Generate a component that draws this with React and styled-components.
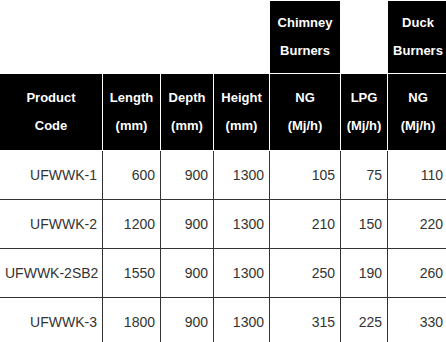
import React from 'react';
import styled, { createGlobalStyle } from 'styled-components';

const GlobalStyle = createGlobalStyle`
  html, body {
    margin: 0;
    padding: 0;
    background: #fff;
    overflow: hidden;
  }
  body {
    font-family: "Liberation Sans", Arial, Helvetica, sans-serif;
  }
`;

const Wrap = styled.div`
  width: 446px;
  height: 342px;
  overflow: hidden;
`;

const Table = styled.table`
  border-collapse: collapse;
  table-layout: fixed;
  width: 449px;
  margin-left: -1px;
  font-family: "Liberation Sans", Arial, Helvetica, sans-serif;
`;

const HeadCell = styled.th`
  background: ${p => (p.$blank ? '#fff' : '#000')};
  color: #fff;
  font-weight: bold;
  font-size: 13px;
  line-height: 28px;
  text-align: center;
  padding: ${p => (p.$top ? '8px 2px' : '10px 2px')};
  border: 1px solid ${p => (p.$blank ? 'transparent' : '#fff')};
  border-bottom: 1px solid #fff;
  white-space: nowrap;
`;

const Cell = styled.td`
  color: #333;
  font-size: 14px;
  line-height: 28px;
  text-align: right;
  padding: 10px 5px;
  border: 1px solid #333;
  white-space: nowrap;
`;

const widths = [103, 58, 53, 56, 71, 47, 61];

const rows = [
  ['UFWWK-1', 600, 900, 1300, 105, 75, 110],
  ['UFWWK-2', 1200, 900, 1300, 210, 150, 220],
  ['UFWWK-2SB2', 1550, 900, 1300, 250, 190, 260],
  ['UFWWK-3', 1800, 900, 1300, 315, 225, 330],
];

const heads = [
  ['Product', 'Code'],
  ['Length', '(mm)'],
  ['Depth', '(mm)'],
  ['Height', '(mm)'],
  ['NG', '(Mj/h)'],
  ['LPG', '(Mj/h)'],
  ['NG', '(Mj/h)'],
];

export default function App() {
  return (
    <Wrap>
      <GlobalStyle />
      <Table>
        <colgroup>
          {widths.map((w, i) => (
            <col key={i} style={{ width: w }} />
          ))}
        </colgroup>
        <thead>
          <tr>
            <HeadCell $blank $top colSpan={4} />
            <HeadCell $top>Chimney<br />Burners</HeadCell>
            <HeadCell $blank $top />
            <HeadCell $top>Duck<br />Burners</HeadCell>
          </tr>
          <tr>
            {heads.map(([a, b], i) => (
              <HeadCell key={i}>{a}<br />{b}</HeadCell>
            ))}
          </tr>
        </thead>
        <tbody>
          {rows.map(r => (
            <tr key={r[0]}>
              {r.map((v, i) => (
                <Cell key={i}>{v}</Cell>
              ))}
            </tr>
          ))}
        </tbody>
      </Table>
    </Wrap>
  );
}
